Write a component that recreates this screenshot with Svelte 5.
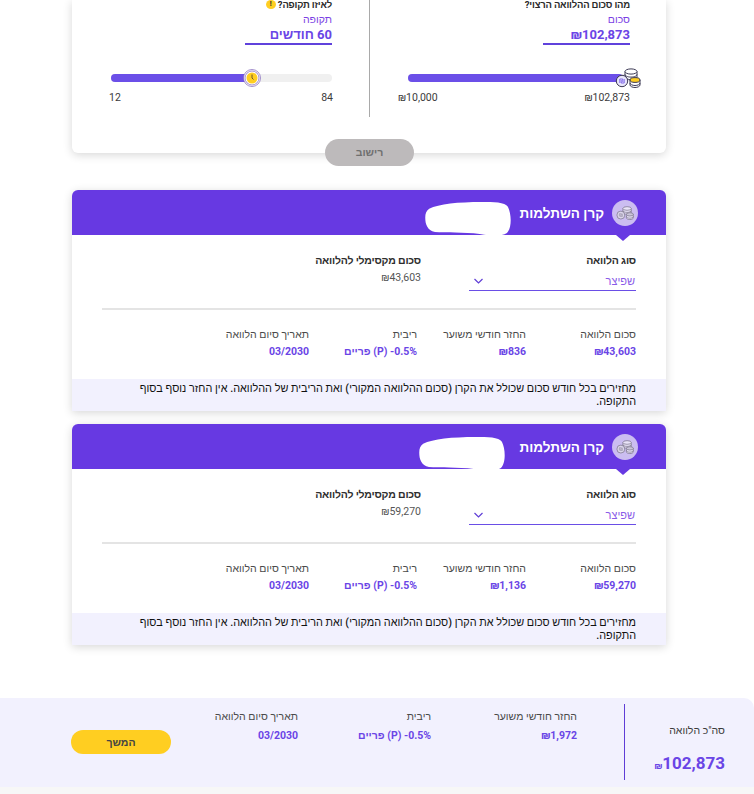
<script>
  const loans = [
    { sum: "₪43,603", monthly: "₪836", blotRight: 150, blotTop: 11 },
    { sum: "₪59,270", monthly: "₪1,136", blotRight: 156, blotTop: 12 },
  ];
</script>

{#snippet coins()}
  <svg class="coins" viewBox="0 0 26 20">
    <path d="M10 3.500v5.500c0 1.400 2.700 2.600 6 2.600s6-1.200 6-2.600V3.500" fill="#fff" stroke="#3d3a55" />
    <path d="M10 6.500c0 1.400 2.700 2.600 6 2.600s6-1.200 6-2.600" fill="none" stroke="#3d3a55" />
    <ellipse cx="16" cy="3.500" rx="6" ry="2.600" fill="#fff" stroke="#3d3a55" />
    <path d="M15 12v5c0 1.400 2.500 2.500 5 2.500s5-1.100 5-2.500v-5z" fill="#fff" stroke="#3d3a55" />
    <ellipse cx="20" cy="12" rx="5" ry="2.400" fill="#ffce21" stroke="#3d3a55" />
    <path d="M15 15c0 1.400 2.500 2.500 5 2.500s5-1.100 5-2.500" fill="none" stroke="#3d3a55" />
    <circle cx="7" cy="13" r="5.700" fill="#e9e6fb" stroke="#3d3a55" />
    <path d="M4.800 15v-4h3v3M9.200 11v4h-3v-3" fill="none" stroke="#6a4ee6" stroke-width=".8" />
  </svg>
{/snippet}

<div class="page" dir="rtl">
  <section class="calc">
    <div class="calc-col amount">
      <h3>מהו סכום ההלוואה הרצוי?</h3>
      <div class="field">
        <span class="field-label">סכום</span>
        <strong class="field-value">₪102,873</strong>
      </div>
      <div class="slider" dir="ltr">
        <div class="fill" style="width: 97%"></div>
        <div class="thumb-coins">{@render coins()}</div>
      </div>
      <div class="range range-amount"><span>₪102,873</span><span>₪10,000</span></div>
    </div>
    <div class="calc-col period">
      <h3>לאיזו תקופה? <span class="warn">!</span></h3>
      <div class="field">
        <span class="field-label">תקופה</span>
        <strong class="field-value">60 חודשים</strong>
      </div>
      <div class="slider" dir="ltr">
        <div class="fill" style="width: 64%"></div>
        <div class="thumb-clock" style="left: 64%">
          <svg viewBox="0 0 18 18">
            <circle cx="9" cy="9" r="8.500" fill="#fff" stroke="#7d62b8" stroke-width=".7" />
            <circle cx="9" cy="9" r="7" fill="#fff" stroke="#7d62b8" stroke-width=".7" />
            <circle cx="9" cy="9" r="5.500" fill="#ffce21" />
            <path d="M9 5.500V9l1.500 1.500" fill="none" stroke="#5b4a2a" stroke-width=".9" />
          </svg>
        </div>
      </div>
      <div class="range range-period"><span>84</span><span>12</span></div>
    </div>
    <button class="recalc">רישוב</button>
  </section>

  <div class="loans">
    {#each loans as loan}
      <article class="loan">
        <header class="loan-head">
          <span class="head-icon">{@render coins()}</span>
          <h2>קרן השתלמות</h2>
          <svg class="scribble" viewBox="0 0 90 36" style="right: {loan.blotRight}px; top: {loan.blotTop}px">
            <path d="M4 8C14 3 34 1 58 1c12 0 24 0 27 5 4 8 4 22-1 27-6 4-16 3-28 1-16-2-36-1-46-2C2 30 0 24 0 17c0-4 1-7 4-9z" fill="#fff" />
          </svg>
        </header>
        <div class="loan-top">
          <div class="loan-type">
            <span class="bold-label">סוג הלוואה</span>
            <div class="select">
              <span>שפיצר</span>
              <svg viewBox="0 0 10 6"><path d="M1 1l4 4 4-4" fill="none" stroke="#5f3dd6" stroke-width="1.200" /></svg>
            </div>
          </div>
          <div class="loan-max">
            <span class="bold-label">סכום מקסימלי להלוואה</span>
            <span class="max-value">{loan.sum}</span>
          </div>
        </div>
        <div class="stats">
          <div class="stat"><span>סכום הלוואה</span><strong>{loan.sum}</strong></div>
          <div class="stat"><span>החזר חודשי משוער</span><strong>{loan.monthly}</strong></div>
          <div class="stat"><span>ריבית</span><strong><bdi dir="ltr">-0.5%</bdi> (P) פריים</strong></div>
          <div class="stat"><span>תאריך סיום הלוואה</span><strong>03/2030</strong></div>
        </div>
        <p class="note">מחזירים בכל חודש סכום שכולל את הקרן (סכום ההלוואה המקורי) ואת הריבית של ההלוואה. אין החזר נוסף בסוף התקופה.</p>
      </article>
    {/each}
  </div>

  <footer class="summary">
    <div class="total">
      <span>סה"כ הלוואה</span>
      <strong><small>₪</small>102,873</strong>
    </div>
    <div class="sum-cols">
      <div class="sum-col monthly"><span>החזר חודשי משוער</span><strong>₪1,972</strong></div>
      <div class="sum-col rate"><span>ריבית</span><strong><bdi dir="ltr">-0.5%</bdi> (P) פריים</strong></div>
      <div class="sum-col date"><span>תאריך סיום הלוואה</span><strong>03/2030</strong></div>
    </div>
    <button class="next">המשך</button>
  </footer>
</div>

<style>
  :global(body) {
    background: #fff;
  }

  .page {
    position: relative;
    width: 754px;
    height: 794px;
    overflow: hidden;
    font-family: Roboto, "Liberation Sans", sans-serif;
    font-size: 11px;
    color: #3b3b3b;
    background: #fff;
  }

  h2, h3, p {
    margin: 0;
  }

  button {
    font-family: inherit;
    border: 0;
    padding: 0;
  }

  .calc {
    position: relative;
    display: grid;
    grid-template-columns: 297px 297px;
    box-sizing: border-box;
    width: 594px;
    height: 153px;
    margin: 0 88px 37px 72px;
    background: #fff;
    border-radius: 0 0 6px 6px;
    box-shadow: 0 2px 10px rgba(0, 0, 0, 0.16);
  }

  .calc-col {
    box-sizing: border-box;
    height: 117px;
    padding: 0 36px 0 38px;
  }

  .calc-col.amount {
    border-left: 1px solid #a9a9a9;
  }

  .calc-col.period {
    padding: 0 37px 0 39px;
  }

  h3 {
    font-size: 9.500px;
    line-height: 9px;
    letter-spacing: -0.2px;
    font-weight: 700;
    color: #2a2a2a;
  }

  .warn {
    display: inline-block;
    width: 10px;
    height: 9px;
    line-height: 9px;
    border-radius: 50%;
    background: #ffce21;
    text-align: center;
    font-size: 7px;
    vertical-align: top;
  }

  .field {
    display: flex;
    flex-direction: column;
    width: fit-content;
    min-width: 87px;
    margin-top: 4px;
    border-bottom: 2px solid #6042dc;
  }

  .field-label {
    font-size: 10.500px;
    line-height: 13px;
    font-weight: 500;
    color: #7b3fe4;
  }

  .field-value {
    margin-top: 1px;
    font-size: 13px;
    line-height: 16px;
    color: #6a45e6;
  }

  .slider {
    position: relative;
    height: 8px;
    margin-top: 29px;
    background: #f0f0f0;
    border-radius: 4px;
  }

  .fill {
    height: 100%;
    background: #6b4fe8;
    border-radius: 4px;
  }

  .thumb-coins {
    position: absolute;
    right: -11px;
    top: -6px;
    width: 26px;
    height: 20px;
  }

  .coins {
    display: block;
    width: 100%;
    height: 100%;
  }

  .thumb-clock {
    position: absolute;
    top: -5px;
    width: 18px;
    height: 18px;
    margin-left: -9px;
  }

  .thumb-clock svg {
    display: block;
    width: 18px;
    height: 18px;
  }

  .range {
    display: flex;
    justify-content: space-between;
    margin-top: 9px;
    font-size: 10.500px;
    line-height: 13px;
    color: #3b3b3b;
  }

  .range-amount {
    margin-left: -10px;
  }

  .range-period {
    margin-left: -2px;
    margin-right: -1px;
  }

  .recalc {
    position: absolute;
    left: 253px;
    bottom: -13px;
    width: 89px;
    height: 27px;
    border-radius: 14px;
    background: #bdbabb;
    color: #6f6f6f;
    font-size: 10.500px;
    font-weight: 700;
  }

  .loans {
    display: flex;
    flex-direction: column;
    gap: 13px;
    width: 594px;
    margin-right: 88px;
  }

  .loan {
    position: relative;
    height: 221px;
    display: flex;
    flex-direction: column;
    background: #fff;
    border-radius: 6px 6px 0 0;
    box-shadow: 0 2px 10px rgba(0, 0, 0, 0.16);
  }

  .loan-head {
    position: relative;
    display: flex;
    align-items: center;
    gap: 8px;
    height: 45px;
    padding-right: 28px;
    background: #6739e2;
    border-radius: 6px 6px 0 0;
    color: #fff;
  }

  .loan-head::after {
    content: "";
    position: absolute;
    right: 36px;
    bottom: -6px;
    border-top: 6px solid #6739e2;
    border-left: 7px solid transparent;
    border-right: 7px solid transparent;
  }

  .head-icon {
    display: flex;
    align-items: center;
    justify-content: center;
    width: 26px;
    height: 26px;
    border-radius: 50%;
    background: #cbbdf1;
  }

  .head-icon .coins {
    width: 18px;
    height: 14px;
    opacity: 0.6;
    filter: grayscale(1);
  }

  .loan-head h2 {
    font-size: 13.500px;
    line-height: 16px;
    font-weight: 700;
  }

  .scribble {
    position: absolute;
    width: 94px;
    height: 35px;
  }

  .loan-top {
    display: flex;
    gap: 48px;
    height: 73px;
    margin: 0 30px;
    border-bottom: 2px solid #e4e4e4;
  }

  .loan-type {
    width: 167px;
    padding-top: 19px;
  }

  .loan-max {
    display: flex;
    flex-direction: column;
    padding-top: 19px;
  }

  .bold-label {
    display: block;
    font-size: 10.500px;
    line-height: 13px;
    letter-spacing: -0.2px;
    font-weight: 700;
    color: #2e2e2e;
  }

  .max-value {
    margin-top: 4px;
    font-size: 10.500px;
    line-height: 13px;
    color: #555;
  }

  .select {
    display: flex;
    align-items: center;
    justify-content: space-between;
    height: 18px;
    margin-top: 5px;
    padding: 0 1px 0 4px;
    border-bottom: 1px solid #6a4ee6;
    font-size: 11px;
    color: #8a5ce8;
  }

  .select svg {
    width: 11px;
    height: 6px;
  }

  .stats {
    display: grid;
    grid-template-columns: 110px 109px 108px auto;
    height: 69px;
    box-sizing: border-box;
    padding: 18px 30px 0;
  }

  .stat span {
    display: block;
    font-size: 10.500px;
    line-height: 13px;
    color: #4a4a4a;
  }

  .stat strong {
    display: block;
    margin-top: 4px;
    font-size: 10.500px;
    line-height: 13px;
    color: #6a45e6;
  }

  .note {
    flex: 1;
    box-sizing: border-box;
    padding: 3px 30px 0 50px;
    background: #f2f1fe;
    font-size: 10.850px;
    line-height: 13px;
    font-weight: 500;
    color: #111;
  }

  .summary {
    position: absolute;
    top: 698px;
    left: 0;
    right: 0;
    height: 89px;
    display: flex;
    align-items: flex-start;
    background: #f2f1fe;
    border-radius: 0 10px 0 0;
    box-shadow: 0 7px 0 #f7f7f7;
  }

  .total {
    display: flex;
    flex-direction: column;
    justify-content: space-between;
    box-sizing: border-box;
    width: 130px;
    height: 76px;
    margin-top: 6px;
    padding: 20px 29px 0 0;
    border-left: 1px solid #5f3dd6;
    font-size: 10.500px;
    line-height: 13px;
  }

  .total strong {
    margin-bottom: 3px;
    font-size: 17px;
    line-height: 22px;
    color: #6a45e6;
    white-space: nowrap;
  }

  .total small {
    font-size: 9px;
  }

  .sum-cols {
    display: flex;
    margin-top: 12px;
    margin-right: 47px;
  }

  .sum-col {
    white-space: nowrap;
  }

  .sum-col span {
    display: block;
    font-size: 10.500px;
    line-height: 13px;
    color: #4a4a4a;
  }

  .sum-col strong {
    display: block;
    margin-top: 6px;
    font-size: 10.500px;
    line-height: 13px;
    color: #6a45e6;
  }

  .monthly {
    width: 146px;
  }

  .rate {
    width: 133px;
  }

  .date {
    width: 127px;
  }

  .next {
    width: 100px;
    height: 24px;
    margin-top: 32px;
    border-radius: 12px;
    background: #ffce21;
    color: #444;
    font-size: 10.500px;
    font-weight: 700;
  }
</style>
